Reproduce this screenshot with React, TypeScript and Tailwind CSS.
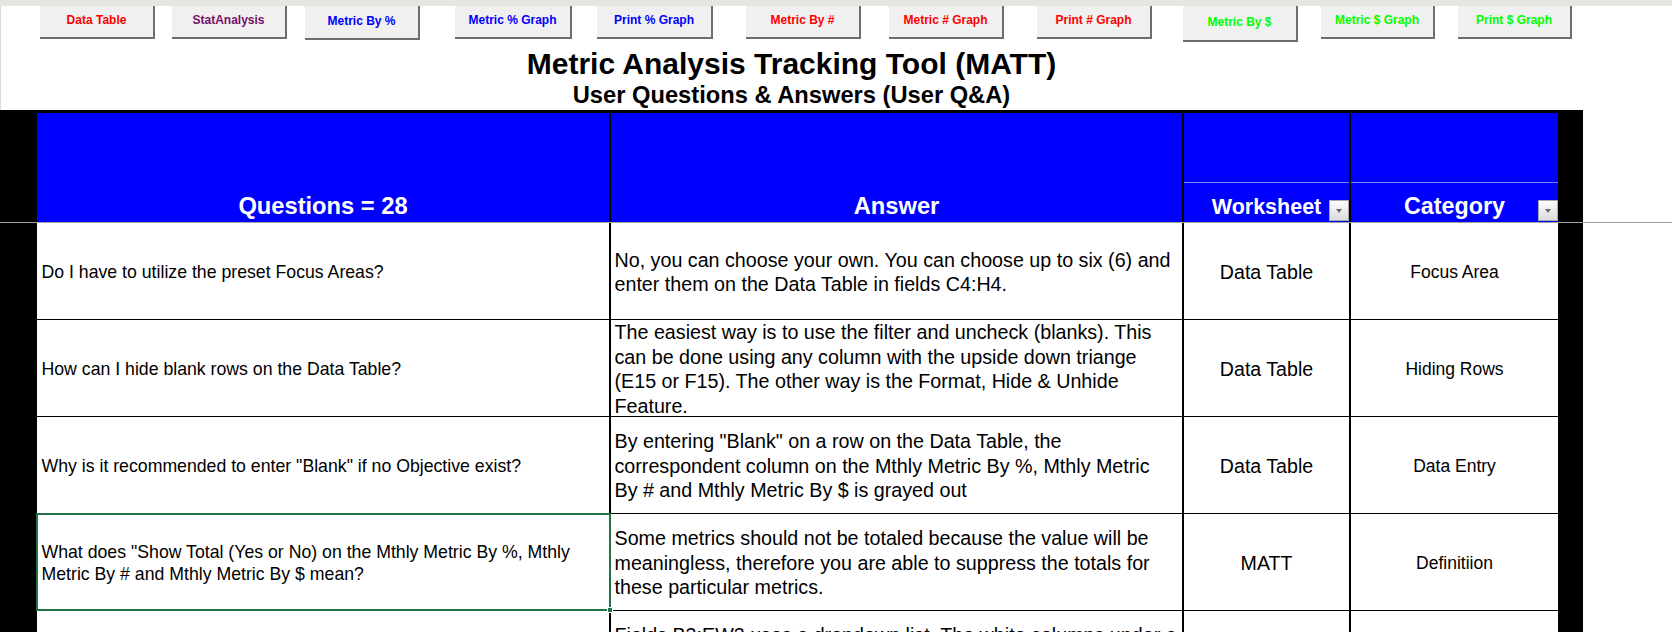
import React from "react";

type Btn = { label: string; cls: string };

const buttons: Btn[] = [
  { label: "Data Table", cls: "ml-[40px] w-[115px] h-[33px] text-[#ff0000]" },
  { label: "StatAnalysis", cls: "ml-[17px] w-[115px] h-[33px] text-[#76106c]" },
  { label: "Metric By %", cls: "ml-[18px] w-[115px] h-[34px] text-[#0000ff]" },
  { label: "Metric % Graph", cls: "ml-[35px] w-[117px] h-[33px] text-[#0000ff]" },
  { label: "Print % Graph", cls: "ml-[25px] w-[116px] h-[33px] text-[#0000ff]" },
  { label: "Metric By #", cls: "ml-[33px] w-[115px] h-[33px] text-[#ff0000]" },
  { label: "Metric # Graph", cls: "ml-[28px] w-[115px] h-[33px] text-[#ff0000]" },
  { label: "Print # Graph", cls: "ml-[33px] w-[115px] h-[33px] text-[#ff0000]" },
  { label: "Metric By $", cls: "ml-[31px] w-[115px] h-[36px] text-[#00ff00]" },
  { label: "Metric $ Graph", cls: "ml-[23px] w-[114px] h-[33px] text-[#00ff00]" },
  { label: "Print $ Graph", cls: "ml-[23px] w-[114px] h-[33px] text-[#00ff00]" },
];

type Row = { q: string[]; a: string[]; ws: string; cat: string; selected?: boolean };

const rows: Row[] = [
  {
    q: ["Do I have to utilize the preset Focus Areas?"],
    a: [
      "No, you can choose your own. You can choose up to six (6) and",
      "enter them on the Data Table in fields C4:H4.",
    ],
    ws: "Data Table",
    cat: "Focus Area",
  },
  {
    q: ["How can I hide blank rows on the Data Table?"],
    a: [
      "The easiest way is to use the filter and uncheck (blanks). This",
      "can be done using any column with the upside down triange",
      "(E15 or F15). The other way is the Format, Hide & Unhide",
      "Feature.",
    ],
    ws: "Data Table",
    cat: "Hiding Rows",
  },
  {
    q: ['Why is it recommended to enter "Blank" if no Objective exist?'],
    a: [
      'By entering "Blank" on a row on the Data Table, the',
      "correspondent column on the Mthly Metric By %, Mthly Metric",
      "By # and Mthly Metric By $ is grayed out",
    ],
    ws: "Data Table",
    cat: "Data Entry",
  },
  {
    q: [
      'What does "Show Total (Yes or No) on the Mthly Metric By %, Mthly',
      "Metric By # and Mthly Metric By $ mean?",
    ],
    a: [
      "Some metrics should not be totaled because the value will be",
      "meaningless, therefore you are able to suppress the totals for",
      "these particular metrics.",
    ],
    ws: "MATT",
    cat: "Definitiion",
    selected: true,
  },
];

const GRID =
  "grid grid-cols-[37px_572px_2px_571px_2px_165px_2px_207px_25px] w-[1583px]";

function Dropdown() {
  return (
    <div className="absolute right-0 bottom-[1px] w-[20px] h-[21px] border border-[#a9a9a9] bg-linear-to-b from-[#fdfdfd] to-[#dcdcdc] flex items-center justify-center">
      <div className="mt-[1px] w-0 h-0 border-l-[3.5px] border-r-[3.5px] border-t-[4px] border-l-transparent border-r-transparent border-t-[#6b6b6b]" />
    </div>
  );
}

export default function App() {
  return (
    <div className="w-[1672px] h-[632px] overflow-hidden bg-white text-black font-['Liberation_Sans',Arial,sans-serif]">
      <div className="h-[6px] bg-[#e6e6e1]" />
      <div className="shadow-[inset_1px_0_0_#d9d9d9] pb-[3px]">
        <div className="flex items-start h-[36px]">
          {buttons.map((b) => (
            <div
              key={b.label}
              className={`${b.cls} shrink-0 flex items-center justify-center pb-[3px] bg-[#f0f0f0] border-r-2 border-b-2 border-[#6e6e6e] text-[12px] font-bold whitespace-nowrap leading-none`}
            >
              {b.label}
            </div>
          ))}
        </div>
        <div className="w-[1583px] mt-[7px] h-[30px] text-center font-bold text-[30px] leading-[30px] whitespace-nowrap">
          Metric Analysis Tracking Tool (MATT)
        </div>
        <div className="w-[1583px] mt-[4px] h-[24px] text-center font-bold text-[23.7px] leading-[24px] whitespace-nowrap">
          User Questions &amp; Answers (User Q&amp;A)
        </div>
      </div>
      <div className="w-[1583px] h-[3px] bg-black" />
      {/* Header */}
      <div className={`${GRID} h-[109px] bg-black`}>
        <div />
        <div className="bg-[#0000ff] flex items-end justify-center pb-[4px]">
          <span className="text-white font-bold text-[23.7px] leading-[24px] whitespace-nowrap">
            Questions = 28
          </span>
        </div>
        <div />
        <div className="bg-[#0000ff] flex items-end justify-center pb-[4px]">
          <span className="text-white font-bold text-[23.7px] leading-[24px]">Answer</span>
        </div>
        <div />
        <div className="bg-[#0000ff] flex flex-col">
          <div className="h-[69px]" />
          <div className="h-px bg-[#6f8cff]" />
          <div className="relative flex-1 flex items-end justify-center pb-[3.5px]">
            <span className="text-white font-bold text-[21.5px] leading-[24px] whitespace-nowrap">
              Worksheet
            </span>
            <Dropdown />
          </div>
        </div>
        <div />
        <div className="bg-[#0000ff] flex flex-col">
          <div className="h-[69px]" />
          <div className="h-px bg-[#6f8cff]" />
          <div className="relative flex-1 flex items-end justify-center pb-[4px]">
            <span className="text-white font-bold text-[23.3px] leading-[24px] whitespace-nowrap">
              Category
            </span>
            <Dropdown />
          </div>
        </div>
        <div />
      </div>
      <div className="h-px bg-[#a3a3a3]" />
      {/* Body rows */}
      {rows.map((r, i) => (
        <div key={i} className={`${GRID} h-[97px] bg-black items-start`}>
          <div />
          <div className="relative h-[96px] bg-white flex items-center pl-[4.5px] pt-[2px]">
            <div className="text-[17.7px] leading-[22.5px] whitespace-nowrap">
              {r.q.map((l, k) => (
                <div key={k}>{l}</div>
              ))}
            </div>
            {r.selected && (
              <div className="absolute -left-[1px] -right-[2px] -top-[1px] -bottom-[1px] border-2 border-[#217346]">
                <div className="absolute -right-[4px] -bottom-[4px] w-[6px] h-[6px] bg-[#217346] border border-white" />
              </div>
            )}
          </div>
          <div />
          <div className="h-[96px] bg-white flex items-center pl-[3.5px] pt-[2px] overflow-hidden">
            <div className="text-[19.7px] leading-[24.5px] whitespace-nowrap">
              {r.a.map((l, k) => (
                <div key={k}>{l}</div>
              ))}
            </div>
          </div>
          <div />
          <div className="h-[96px] bg-white flex items-center justify-center pt-[2px]">
            <span className="text-[19.6px] leading-[24px] whitespace-nowrap">{r.ws}</span>
          </div>
          <div />
          <div className="h-[96px] bg-white flex items-center justify-center pt-[2px]">
            <span className="text-[17.5px] leading-[22px] whitespace-nowrap">{r.cat}</span>
          </div>
          <div />
        </div>
      ))}
      <div className={`${GRID} h-[97px] bg-black items-start`}>
        <div />
        <div className="h-[96px] bg-white" />
        <div />
        <div className="h-[96px] bg-white pl-[3.5px] pt-[12px] overflow-hidden">
          <div className="text-[19.7px] leading-[24.5px] whitespace-nowrap">
            Fields B3:EW3 uses a dropdown list. The white columns under a
          </div>
        </div>
        <div />
        <div className="h-[96px] bg-white" />
        <div />
        <div className="h-[96px] bg-white" />
        <div />
      </div>
    </div>
  );
}
